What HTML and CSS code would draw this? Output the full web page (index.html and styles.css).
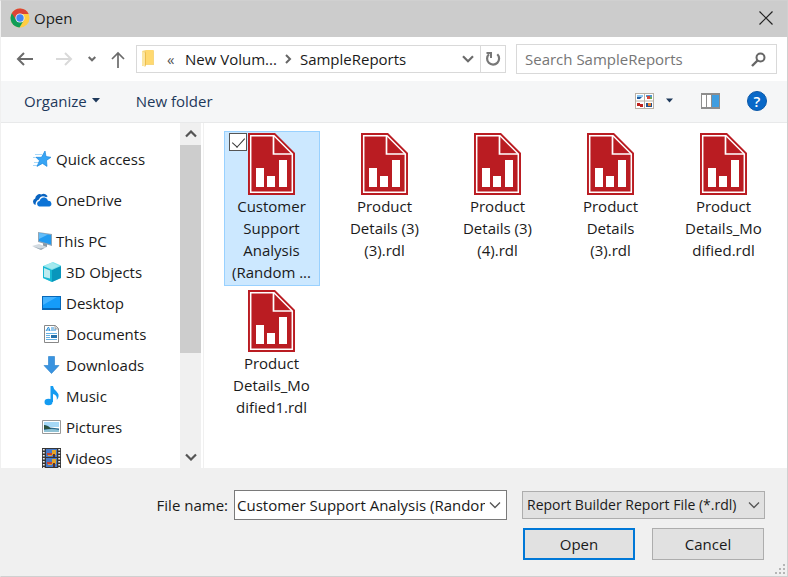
FILE: index.html
```html
<!DOCTYPE html>
<html lang="en">
<head>
<meta charset="utf-8">
<title>Open</title>
<link rel="stylesheet" href="styles.css">
</head>
<body>
<svg class="defs" aria-hidden="true">
  <symbol id="report" viewBox="0 0 47 62">
    <path fill="#ba1c22" d="M0 0h27l20 20v42H0z"/>
    <path fill="none" stroke="#fff" stroke-width="1.5" d="M2.700 2.700H26L44.300 21V59.300H2.700z"/>
    <path fill="none" stroke="#fff" stroke-width="1.700" d="M25.500 3v18H44"/>
    <path fill="#ba1c22" d="M27 5.500L41 19.500H27z"/>
    <path fill="#fff" d="M8 35h8v19H8zM19 43h8v11h-8zM31 27h8v27h-8z"/>
  </symbol>
  <symbol id="chevron" viewBox="0 0 12 8"><path fill="none" stroke="currentColor" stroke-width="1.300" d="M1 1.500l5 5 5-5"/></symbol>
</svg>
<div class="dialog">
  <header class="titlebar">
    <svg class="chrome" viewBox="0 0 20 20">
      <circle cx="10" cy="10" r="9.500" fill="#ffcd42"/>
      <path fill="#0f9d58" d="M1.800 5.200A9.500 9.500 0 0 0 9.500 19.500l4.300-7.200L10 10z"/>
      <path fill="#db4437" d="M1.800 5.200A9.500 9.500 0 0 1 18.700 6H10a4.300 4.300 0 0 0-4 5.800z"/>
      <circle cx="10" cy="10" r="4.600" fill="#f3f3f3"/><circle cx="10" cy="10" r="3.700" fill="#4285f4"/>
    </svg>
    <h1>Open</h1>
    <button class="close" aria-label="Close"><svg viewBox="0 0 14 14"><path fill="none" stroke="#222" stroke-width="1.200" d="M.5.5l13 13M13.500.5l-13 13"/></svg></button>
  </header>

  <div class="navbar">
    <div class="history">
      <button aria-label="Back"><svg width="18" height="14" viewBox="0 0 18 14"><path fill="none" stroke="#6b6b6b" stroke-width="2" d="M17 7H2M8 1L2 7l6 6"/></svg></button>
      <button aria-label="Forward" disabled><svg width="18" height="14" viewBox="0 0 18 14"><path fill="none" stroke="#d9d9d9" stroke-width="2" d="M1 7h15M10 1l6 6-6 6"/></svg></button>
      <button aria-label="Recent locations"><svg width="8" height="6" viewBox="0 0 8 6"><path fill="none" stroke="#6b6b6b" stroke-width="2" d="M.7 1L4 4.300 7.300 1"/></svg></button>
      <button aria-label="Up"><svg width="14" height="17" viewBox="0 0 14 17"><path fill="none" stroke="#6b6b6b" stroke-width="1.700" d="M7 17V2M1 8l6-6 6 6"/></svg></button>
    </div>
    <nav class="address" aria-label="Address">
      <svg class="folder" viewBox="0 0 14 20"><path fill="#f7d77e" d="M1 2l4-1h7q1 0 1 1v14H4l-3 1z"/><path fill="#fbe6a4" d="M1 2l3 2v14l-3-2z"/><path fill="#ffd970" d="M5 1h7v14H5z"/><path fill="#edbe4d" d="M4 4l1-2v14l-1 2z"/></svg>
      <span class="more">«</span>
      <a href="#volume">New Volum...</a>
      <svg class="crumb" viewBox="0 0 7 10"><path fill="none" stroke="#666" stroke-width="2" d="M1 1l4 4-4 4"/></svg>
      <a href="#reports">SampleReports</a>
      <button class="drop" aria-label="Previous locations"><svg width="12" height="8" viewBox="0 0 12 8"><path fill="none" stroke="#6b6b6b" stroke-width="2.200" d="M1 1.200l5 5 5-5"/></svg></button>
      <button class="refresh" aria-label="Refresh"><svg width="16" height="16" viewBox="0 0 16 16"><path fill="none" stroke="#777" stroke-width="2.200" d="M12.300 3.300A6 6 0 1 1 4 3.200"/><path fill="none" stroke="#777" stroke-width="2" d="M1.500 2H6v5"/></svg></button>
    </nav>
    <div class="search">
      <input type="search" aria-label="Search SampleReports" placeholder="Search SampleReports">
      <svg width="15" height="15" viewBox="0 0 15 15"><circle cx="9.500" cy="5.500" r="4" fill="none" stroke="#666" stroke-width="2"/><path stroke="#666" stroke-width="2.400" d="M6.500 8.500l-5.500 5.500"/></svg>
    </div>
  </div>

  <div class="toolbar">
    <button class="organize">Organize <svg width="8" height="5" viewBox="0 0 8 5"><path fill="#1e395b" d="M0 0h8L4 4.500z"/></svg></button>
    <button>New folder</button>
    <div class="views">
      <button aria-label="Change view"><svg width="19" height="16" viewBox="0 0 19 16"><path fill="#b8b0a6" d="M0 0h19v16H0z"/><path fill="#fff" d="M1 1h8v6.500H1zM10 1h8v6.500h-8zM1 8.500h8V15H1zM10 8.500h8V15h-8z"/><path fill="#8cc8f4" d="M2 2h6v2H2z"/><path fill="#245b9b" d="M2 4h5l-2 2H2z"/><path fill="#5296ce" d="M11 2h6v2h-6z"/><path fill="#d4473b" d="M12 3h3v3h-3z"/><path fill="#6fa954" d="M15 4h2v2h-2z"/><path fill="#bf201c" d="M2 10h3v3H2zM5 11h3v3H5z"/><path fill="#25508d" d="M11 10h6v4h-6z"/><path fill="#e9802c" d="M13 10h3v3h-3z"/></svg></button>
      <button class="viewmore" aria-label="More view options"><svg width="8" height="5" viewBox="0 0 8 5"><path fill="#1e395b" d="M0 .5h7L3.500 4.500z"/></svg></button>
      <button class="preview" aria-label="Preview pane"><svg width="19" height="16" viewBox="0 0 19 16"><path fill="#8d8d8d" d="M0 0h19v16H0z"/><path fill="#fff" d="M1 2h4v12H1zM6 2h4v12H6z"/><path fill="#3f9de0" d="M11 2h7v12h-7z"/></svg></button>
      <button class="help" aria-label="Help">?</button>
    </div>
  </div>

  <main class="content">
    <nav class="places" aria-label="Places">
      <ul>
        <li class="root"><a href="#quick"><svg viewBox="0 0 20 20"><path fill="#a9d9fa" d="M3 5h7v1H3zM1 8h6v1H1zM2 13h5v1H2zM1 16h5v1H1z"/><path fill="#37a5f5" stroke="#1c86dc" stroke-width=".7" d="M13 2l1 5.500 5 .8-4.500 3.100.5 6-4.500-3-5.500 3 2.500-5.700L4 8.300h5.500z"/></svg>Quick access</a></li>
        <li class="root"><a href="#onedrive"><svg viewBox="0 0 20 20"><path fill="#0a64c0" d="M3.500 15a3.500 3.500 0 0 1-.3-6.600 4.500 4.500 0 0 1 6-4 5 5 0 0 1 6.500 1.800l-1.500 1Q9 4.500 7 9.500 3.500 10.500 3.500 15z"/><path fill="#0c73d6" d="M7 16.500a2.900 2.900 0 0 1 .5-5.600Q9 6.800 12.800 7.500q2.800.8 3.200 3.200a3 3 0 0 1 1.400 5.800z"/></svg>OneDrive</a></li>
        <li class="root"><a href="#pc"><svg viewBox="0 0 20 20"><path fill="#90a5b6" d="M6 1l14 2v12L6 11z"/><path fill="#219af0" d="M7 2l12 2v9.500L7 10z"/><path fill="#62bdf9" d="M7 2l9 1.500L7 8z"/><path fill="#8999a6" d="M11 12l4 1v3h-4z"/><path fill="#d3dbe1" d="M0 15l7-2 8 3-6 3z"/><path fill="#9caab5" d="M1 15.500l7 2 5-1-4 2.500z"/></svg>This PC</a></li>
        <li><a href="#objects"><svg viewBox="0 0 20 20"><path fill="#7be3ed" d="M1 4l10-4 8 3.500V16l-9 4-9-4z"/><path fill="#16b7d3" d="M1 4l9 4v12l-9-4z"/><path fill="#0996bc" d="M10 8l9-4v12l-9 4z"/><path fill="#a4e9ee" d="M2 4l8-3.500L17 4l-7 3z"/><path fill="#bdebef" d="M2 6l6 2.500v8L2 15z"/></svg>3D Objects</a></li>
        <li><a href="#desktop"><svg viewBox="0 0 20 20"><path fill="#0868b8" d="M0 3h19v14H0z"/><path fill="#159cfa" d="M1 4h17v11H1z"/><path fill="#45b3ff" d="M1 4h14L1 12z"/></svg>Desktop</a></li>
        <li><a href="#documents"><svg viewBox="0 0 20 20"><path fill="#fff" stroke="#888" d="M2.500 1.500h11l3 3v14h-14z"/><path fill="#ddd" stroke="#888" stroke-width=".7" d="M13 1.500v3.500h3.500"/><path fill="none" stroke="#2b90d9" d="M4 7l2.500-4 1.500 4M5 6h3M9 4h3M9 6h5"/><path fill="#65b1e3" d="M4 9h11v1H4zM4 11h4v1H4zM4 13h4v1H4zM4 15h11v1H4z"/><path fill="#2571aa" d="M9 11h6v3H9z"/></svg>Documents</a></li>
        <li><a href="#downloads"><svg viewBox="0 0 20 20"><path fill="#3993e0" stroke="#247dc9" stroke-width=".6" d="M6.500 1.500h6v9H17l-7.500 8L2 10.500h4.500z"/></svg>Downloads</a></li>
        <li><a href="#music"><svg viewBox="0 0 20 20"><ellipse cx="6.500" cy="16" rx="4" ry="3.200" fill="#149bf1"/><path fill="#149bf1" d="M8.500 0H11q.5 3.500 3.500 5.500 4 4 .3 8.500Q15.500 9 11 8v8H8.500z"/></svg>Music</a></li>
        <li><a href="#pictures"><svg viewBox="0 0 20 20"><path fill="#fff" stroke="#999" d="M.5 3.500h18v13H.500z"/><path fill="#a6d8f6" d="M2 5h15v5H2z"/><path fill="#2a688d" d="M2 8q4 0 6 2.500l9 1V15H2z"/><path fill="#8fc2d5" d="M2 13q8-2 15 0v2H2z"/><path fill="#2c523e" d="M2 8q5 1 7 4H2z"/></svg>Pictures</a></li>
        <li><a href="#videos"><svg viewBox="0 0 20 20"><path fill="#353535" d="M0 0h19v20H0z"/><path fill="#4779c7" d="M4 1h11v8H4zM4 10h11v9H4z"/><path fill="#c84431" d="M5 5h5v2H5zM5 14h5v2H5z"/><path fill="#e4a529" d="M10 2h4v5h-4zM10 11h4v5h-4zM6 7h4v1H6zM6 16h4v1H6z"/><path fill="#5c2f26" d="M11 6h2v3h-2zM11 15h2v4h-2z"/><path stroke="#eee" stroke-width="1.800" stroke-dasharray="1.500 1.500" d="M1.800 1v19M17.200 1v19"/></svg>Videos</a></li>
      </ul>
    </nav>
    <div class="scroll">
      <button aria-label="Scroll up"><svg width="12" height="8" viewBox="0 0 12 8"><path fill="none" stroke="#555" stroke-width="2.200" d="M1 6.500l5-5 5 5"/></svg></button>
      <div class="track"><div class="thumb"></div></div>
      <button aria-label="Scroll down"><svg width="12" height="8" viewBox="0 0 12 8"><path fill="none" stroke="#555" stroke-width="2.200" d="M1 1.500l5 5 5-5"/></svg></button>
    </div>
    <ul class="files">
      <li class="file selected"><input type="checkbox" aria-label="Select Customer Support Analysis" checked><svg><use href="#report"/></svg><span>Customer<br>Support<br>Analysis<br>(Random ...</span></li>
      <li class="file"><svg><use href="#report"/></svg><span>Product<br>Details (3)<br>(3).rdl</span></li>
      <li class="file"><svg><use href="#report"/></svg><span>Product<br>Details (3)<br>(4).rdl</span></li>
      <li class="file"><svg><use href="#report"/></svg><span>Product<br>Details<br>(3).rdl</span></li>
      <li class="file"><svg><use href="#report"/></svg><span>Product<br>Details_Mo<br>dified.rdl</span></li>
      <li class="file"><svg><use href="#report"/></svg><span>Product<br>Details_Mo<br>dified1.rdl</span></li>
    </ul>
  </main>

  <footer class="footer">
    <div class="fields">
      <label for="name">File name:</label>
      <div class="namebox">
        <input id="name" type="text" value="Customer Support Analysis (Random Data).rdl">
        <button aria-label="Recent file names"><svg width="12" height="8"><use href="#chevron"/></svg></button>
      </div>
      <div class="typebox">
        <select aria-label="File type"><option>Report Builder Report File (*.rdl)</option></select>
        <svg width="12" height="8"><use href="#chevron"/></svg>
      </div>
    </div>
    <div class="actions">
      <button class="primary">Open</button>
      <button>Cancel</button>
    </div>
    <svg class="grip" viewBox="0 0 10 10"><path fill="#b5b5b5" d="M8 0h2v2H8zM4 4h2v2H4zM8 4h2v2H8zM0 8h2v2H0zM4 8h2v2H4zM8 8h2v2H8z"/></svg>
  </footer>
</div>
</body>
</html>
```
FILE: styles.css
```css
* { box-sizing: border-box; }

body {
  margin: 0;
  font: 15px/22px "Open Sans", "Noto Sans", sans-serif;
  color: #1a1a1a;
}

button, input, select {
  margin: 0;
  padding: 0;
  border: 0;
  background: none;
  font: inherit;
  color: inherit;
}

a { color: inherit; text-decoration: none; }
ul { margin: 0; padding: 0; list-style: none; }
svg { display: block; flex: none; }
.defs { position: absolute; width: 0; height: 0; }

.dialog {
  display: flex;
  flex-direction: column;
  height: 100vh;
  background: #fff;
  border: 1px solid #d0d0d0;
  border-left-color: #f0f0f0;
}

.titlebar {
  display: flex;
  align-items: center;
  gap: 4px;
  height: 36px;
  padding: 0 14px 2px 9px;
  background: #ccc;
}
.titlebar h1 { margin: 0; font-size: 15px; font-weight: 400; }
.chrome { width: 20px; height: 20px; }
.close { margin-left: auto; }
.close svg { width: 14px; height: 14px; }

.navbar {
  display: flex;
  align-items: center;
  height: 44px;
  padding: 0 10px 0 15px;
}
.history { display: flex; align-items: center; width: 120px; gap: 15px; }
.history button:nth-child(2) { margin-left: 6px; }
.address {
  flex: 1;
  display: flex;
  align-items: center;
  height: 28px;
  padding-left: 4px;
  border: 1px solid #d9d9d9;
  white-space: nowrap;
}
.folder { width: 14px; height: 20px; }
.more { width: 30px; padding-left: 12px; color: #555; }
.crumb { width: 7px; height: 10px; margin: 0 8px; }
.drop { margin-left: auto; padding: 0 6px; }
.refresh { align-self: stretch; padding: 0 4px; border-left: 1px solid #d9d9d9; }
.search {
  display: flex;
  align-items: center;
  width: 261px;
  height: 30px;
  margin-left: 10px;
  padding: 0 10px 0 8px;
  border: 1px solid #d9d9d9;
}
.search input { flex: 1; min-width: 0; outline: 0; }
.search input::placeholder { color: #767676; opacity: 1; }

.toolbar {
  display: flex;
  align-items: center;
  gap: 36px;
  height: 42px;
  padding: 0 20px 2px 23px;
  background: #f5f6f7;
  border-bottom: 1px solid #e8e9ea;
  color: #1e395b;
}
.organize { display: flex; align-items: center; gap: 5px; }
.views { display: flex; align-items: center; margin-left: auto; }
.viewmore { margin-left: 12px; }
.preview { margin-left: 27px; }
.help {
  width: 20px;
  height: 20px;
  margin-left: 27px;
  border: 1px solid #0b58a8;
  border-radius: 50%;
  background: #0868c8;
  color: #fff;
  font-size: 15px;
  font-weight: 600;
  line-height: 18px;
}

.content { flex: 1; display: flex; min-height: 0; }
.places { width: 179px; padding-top: 15px; overflow: hidden; }
.places a {
  display: flex;
  align-items: center;
  gap: 4px;
  height: 31px;
  padding-left: 41px;
}
.places svg { width: 20px; height: 20px; }
.places .root a { height: 41px; padding-left: 31px; }
.root + li:not(.root) { margin-top: -5px; }
.scroll {
  display: flex;
  flex-direction: column;
  width: 21px;
  background: #f0f0f0;
}
.scroll button { display: flex; align-items: center; justify-content: center; height: 22px; }
.track { flex: 1; }
.thumb { height: 69%; background: #cdcdcd; }

.files {
  flex: 1;
  display: grid;
  grid-template-columns: repeat(auto-fill, 96px);
  grid-auto-rows: 155px;
  gap: 2px 17px;
  align-content: start;
  margin-left: 2px;
  padding: 8px 8px 0 20px;
  border-left: 1px solid #f0f0f0;
}
.file {
  position: relative;
  display: flex;
  flex-direction: column;
  align-items: center;
  border: 1px solid transparent;
  padding: 1px 1px 0 0;
  text-align: center;
  white-space: nowrap;
}
.file svg { width: 47px; height: 62px; }
.selected { background: #cce8ff; border-color: #99d1ff; }
.file input {
  position: absolute;
  top: 1px;
  left: 4px;
  width: 18px;
  height: 18px;
  appearance: none;
  border: 1px solid #555;
  background: #fff;
}
.file input:checked::after {
  content: "";
  position: absolute;
  top: 1px;
  left: 5px;
  width: 6px;
  height: 11px;
  border: solid #333;
  border-width: 0 1px 1px 0;
  transform: rotate(42deg);
}

.footer {
  position: relative;
  display: flex;
  flex-direction: column;
  gap: 8px;
  height: 108px;
  padding: 22px 22px 0;
  background: #f0f0f0;
}
.fields, .actions { display: flex; align-items: center; justify-content: flex-end; }
.fields label { margin-right: 6px; }
.namebox {
  display: flex;
  align-items: center;
  width: 273px;
  height: 30px;
  margin-right: 15px;
  padding: 0 5px 0 2px;
  border: 1px solid #7a7a7a;
  background: #fff;
}
.namebox input { flex: 1; min-width: 0; margin-right: 4px; outline: 0; }
.namebox svg, .typebox svg { color: #555; }
.typebox { position: relative; width: 243px; height: 28px; }
.typebox select {
  width: 100%;
  height: 100%;
  padding-left: 4px;
  appearance: none;
  border: 1px solid #adadad;
  background: #e1e1e1;
  font-size: 14px;
}
.typebox svg { position: absolute; right: 5px; top: 10px; pointer-events: none; }
.actions { gap: 17px; padding-right: 1px; }
.actions button {
  width: 112px;
  height: 32px;
  border: 1px solid #adadad;
  background: #e1e1e1;
}
.actions .primary { border: 2px solid #0078d7; }
.grip { position: absolute; right: 2px; bottom: 2px; width: 10px; height: 10px; }
```
